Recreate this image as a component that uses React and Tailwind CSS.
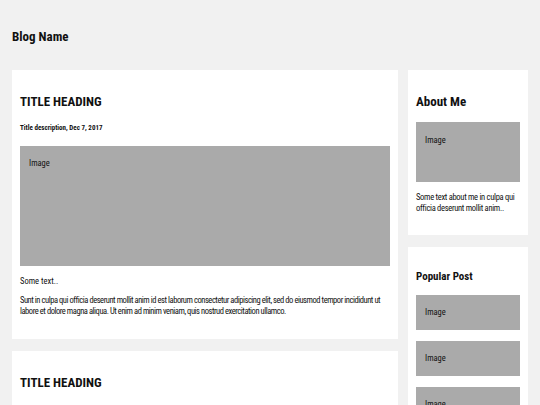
function ImageBox({ className = "" }) {
  return <div className={`bg-[#aaa] px-[9px] text-[8.5px] leading-[12px] ${className}`}>Image</div>;
}

function Post() {
  return (
    <div className="bg-white px-2 pt-[24px] pb-[22px]">
      <h2 className="text-[13px] font-bold leading-[16px]">TITLE HEADING</h2>
      <h5 className="text-[7px] font-bold leading-[10px] mt-[13px]">Title description, Dec 7, 2017</h5>
      <ImageBox className="h-[120px] mt-[13px] pt-[11px]" />
      <p className="text-[8.5px] leading-[11px] mt-[10px]">Some text..</p>
      <p className="text-[8.5px] leading-[11px] mt-[8px] tracking-[-0.45px]">
        Sunt in culpa qui officia deserunt mollit anim id est laborum consectetur adipiscing elit, sed do eiusmod tempor incididunt ut labore et dolore magna aliqua. Ut enim ad minim veniam, quis nostrud exercitation ullamco.
      </p>
    </div>
  );
}

export default function App() {
  return (
    <div className="min-h-[405px] bg-[#f1f1f1] px-3 text-[#111] font-[family-name:Roboto,sans-serif] font-stretch-[75%]">
      <div className="pt-[29px] pb-[25px]">
        <h1 className="text-[13px] font-bold leading-[16px]">Blog Name</h1>
      </div>

      <div className="flex gap-[10px] items-start">
        <div className="flex-1 flex flex-col gap-3">
          <Post />
          <Post />
        </div>

        <div className="w-[120px] flex flex-col gap-3">
          <div className="bg-white px-2 pt-[24px] pb-[21px]">
            <h2 className="text-[13px] font-bold leading-[16px]">About Me</h2>
            <ImageBox className="h-[60px] mt-[12px] pt-[12px]" />
            <p className="text-[8.5px] leading-[11px] mt-[10px] tracking-[-0.3px]">
              Some text about me in culpa qui officia deserunt mollit anim..
            </p>
          </div>
          <div className="bg-white px-2 pt-[23px] pb-[20px]">
            <h3 className="text-[11px] font-bold leading-[14px]">Popular Post</h3>
            <div className="flex flex-col gap-[11px] mt-[11px]">
              <ImageBox className="h-[35px] pt-[11px]" />
              <ImageBox className="h-[35px] pt-[11px]" />
              <ImageBox className="h-[35px] pt-[11px]" />
            </div>
          </div>
        </div>
      </div>
    </div>
  );
}
